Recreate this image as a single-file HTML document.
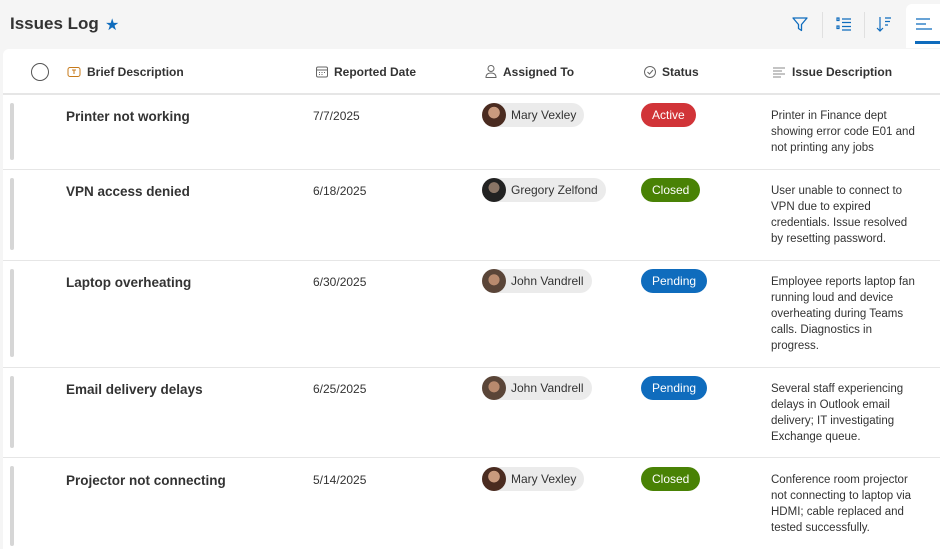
<!DOCTYPE html>
<html><head><meta charset="utf-8"><style>
*{box-sizing:border-box;margin:0;padding:0}
body{width:940px;height:540px;overflow:hidden;background:#f5f5f5;font-family:"Segoe UI","Liberation Sans",sans-serif;color:#242424;position:relative}
.abs{position:absolute}
.card{position:absolute;left:3px;top:49px;width:940px;height:500px;background:#fff;border-radius:6px 0 0 0}
.hdr{font-size:12px;font-weight:bold;color:#333;top:65px}
.row{position:absolute;left:3px;width:937px;border-bottom:1px solid #e6e6e6}
.bar{position:absolute;left:7px;top:8px;width:4px;background:#d6d6d6;border-radius:2px}
.t{position:absolute;left:63px;font-size:13.5px;font-weight:bold;color:#333}
.d{position:absolute;left:310px;font-size:12px;color:#333}
.p{position:absolute;left:479px;height:24px;background:#ebebeb;border-radius:12px;font-size:12px;line-height:24px;padding:0 8px 0 29px;color:#333}
.av{position:absolute;left:0;top:0;width:24px;height:24px;border-radius:50%;background:radial-gradient(circle at 50% 40%,#c99a7e 0 30%,#4a2b20 32%)}
.s{position:absolute;left:638px;height:24px;border-radius:12px;color:#fff;font-size:12px;line-height:24px;padding:0 11px}
.x{position:absolute;left:768px;font-size:11.5px;line-height:16px;color:#333;width:147px}
</style></head><body>
<div class="abs" style="left:10px;top:14px;font-size:17px;font-weight:bold;color:#333">Issues Log</div>
<div class="abs" style="left:105px;top:15px;font-size:16px;color:#0f6cbd">★</div>
<svg class="abs" style="left:790px;top:14px" width="20" height="20" viewBox="0 0 20 20"><path d="M3 4h14l-5.5 6.5v6l-3-2v-4z" fill="none" stroke="#0f6cbd" stroke-width="1.3" stroke-linejoin="round"/></svg>
<div class="abs" style="left:822px;top:12px;width:1px;height:26px;background:#e0e0e0"></div>
<svg class="abs" style="left:834px;top:14px" width="20" height="20" viewBox="0 0 20 20" stroke="#0f6cbd" fill="none" stroke-width="1.2"><rect x="3" y="4" width="2" height="2.5"/><rect x="3" y="12" width="2" height="2.5"/><path d="M8 5h9M8 8.5h9M8 12.5h9M8 16h9"/></svg>
<div class="abs" style="left:864px;top:12px;width:1px;height:26px;background:#e0e0e0"></div>
<svg class="abs" style="left:874px;top:14px" width="20" height="20" viewBox="0 0 20 20" stroke="#0f6cbd" fill="none" stroke-width="1.2"><path d="M6 3v14M3 14l3 3 3-3M11 4h6M11 7.5h5M11 11h3"/></svg>
<div class="abs" style="left:906px;top:4px;width:40px;height:44px;background:#fff;border-radius:6px 0 0 0"></div>
<svg class="abs" style="left:914px;top:14px" width="20" height="20" viewBox="0 0 20 20" stroke="#0f6cbd" stroke-width="1.2"><path d="M2 5h14M2 10h10M2 15h16"/></svg>
<div class="abs" style="left:915px;top:41px;width:25px;height:3px;background:#0f6cbd"></div>
<div class="card"></div>
<div class="abs" style="left:31px;top:63px;width:18px;height:18px;border:1.3px solid #555;border-radius:50%"></div>
<svg class="abs" style="left:67px;top:65px" width="14" height="14" viewBox="0 0 14 14" fill="none" stroke="#c77a1a" stroke-width="1"><rect x="1" y="2.5" width="12" height="9" rx="2"/><path d="M5 5h4M7 5v4"/></svg>
<div class="abs hdr" style="left:87px">Brief Description</div>
<svg class="abs" style="left:315px;top:65px" width="14" height="14" viewBox="0 0 14 14" fill="none" stroke="#666"><rect x="1.5" y="2" width="11" height="10" rx="1.5"/><path d="M1.5 5h11M4 7.5h1M6.5 7.5h1M9 7.5h1M4 9.5h1M6.5 9.5h1"/></svg>
<div class="abs hdr" style="left:334px">Reported Date</div>
<svg class="abs" style="left:484px;top:64px" width="14" height="15" viewBox="0 0 14 15" fill="none" stroke="#666"><circle cx="7" cy="4.5" r="3"/><path d="M2 13.5c0-3 2-4.5 5-4.5s5 1.5 5 4.5z"/></svg>
<div class="abs hdr" style="left:503px">Assigned To</div>
<svg class="abs" style="left:643px;top:65px" width="14" height="14" viewBox="0 0 14 14" fill="none" stroke="#666"><circle cx="7" cy="7" r="5.5"/><path d="M4.5 7l2 2 3.5-4"/></svg>
<div class="abs hdr" style="left:662px">Status</div>
<svg class="abs" style="left:772px;top:65px" width="14" height="14" viewBox="0 0 14 14" stroke="#888"><path d="M1 3h12M1 6h9M1 9h12M1 12h8"/></svg>
<div class="abs hdr" style="left:792px">Issue Description</div>
<div class="abs" style="left:3px;top:93px;width:937px;height:2px;background:#e6e6e6"></div>

<div class="row" style="top:95px;height:75px"><div class="bar" style="height:57px"></div>
<div class="t" style="top:14px">Printer not working</div><div class="d" style="top:14px">7/7/2025</div>
<div class="p" style="top:8px"><div class="av"></div>Mary Vexley</div>
<div class="s" style="top:8px;background:#d13438">Active</div>
<div class="x" style="top:13px">Printer in Finance dept showing error code E01 and not printing any jobs</div></div>

<div class="row" style="top:170px;height:91px"><div class="bar" style="height:72px"></div>
<div class="t" style="top:14px">VPN access denied</div><div class="d" style="top:14px">6/18/2025</div>
<div class="p" style="top:8px"><div class="av" style="background:radial-gradient(circle at 50% 40%,#8a7566 0 28%,#222 30%)"></div>Gregory Zelfond</div>
<div class="s" style="top:8px;background:#498205">Closed</div>
<div class="x" style="top:13px">User unable to connect to VPN due to expired credentials. Issue resolved by resetting password.</div></div>

<div class="row" style="top:261px;height:107px"><div class="bar" style="height:88px"></div>
<div class="t" style="top:14px">Laptop overheating</div><div class="d" style="top:14px">6/30/2025</div>
<div class="p" style="top:8px"><div class="av" style="background:radial-gradient(circle at 50% 45%,#b88a6e 0 30%,#5a4538 32%)"></div>John Vandrell</div>
<div class="s" style="top:8px;background:#0f6cbd">Pending</div>
<div class="x" style="top:13px">Employee reports laptop fan running loud and device overheating during Teams calls. Diagnostics in progress.</div></div>

<div class="row" style="top:368px;height:90px"><div class="bar" style="height:72px"></div>
<div class="t" style="top:14px">Email delivery delays</div><div class="d" style="top:14px">6/25/2025</div>
<div class="p" style="top:8px"><div class="av" style="background:radial-gradient(circle at 50% 45%,#b88a6e 0 30%,#5a4538 32%)"></div>John Vandrell</div>
<div class="s" style="top:8px;background:#0f6cbd">Pending</div>
<div class="x" style="top:13px">Several staff experiencing delays in Outlook email delivery; IT investigating Exchange queue.</div></div>

<div class="row" style="top:458px;height:90px;border:0"><div class="bar" style="height:80px"></div>
<div class="t" style="top:15px">Projector not connecting</div><div class="d" style="top:15px">5/14/2025</div>
<div class="p" style="top:9px"><div class="av"></div>Mary Vexley</div>
<div class="s" style="top:9px;background:#498205">Closed</div>
<div class="x" style="top:14px">Conference room projector not connecting to laptop via HDMI; cable replaced and tested successfully.</div></div>
</body></html>
